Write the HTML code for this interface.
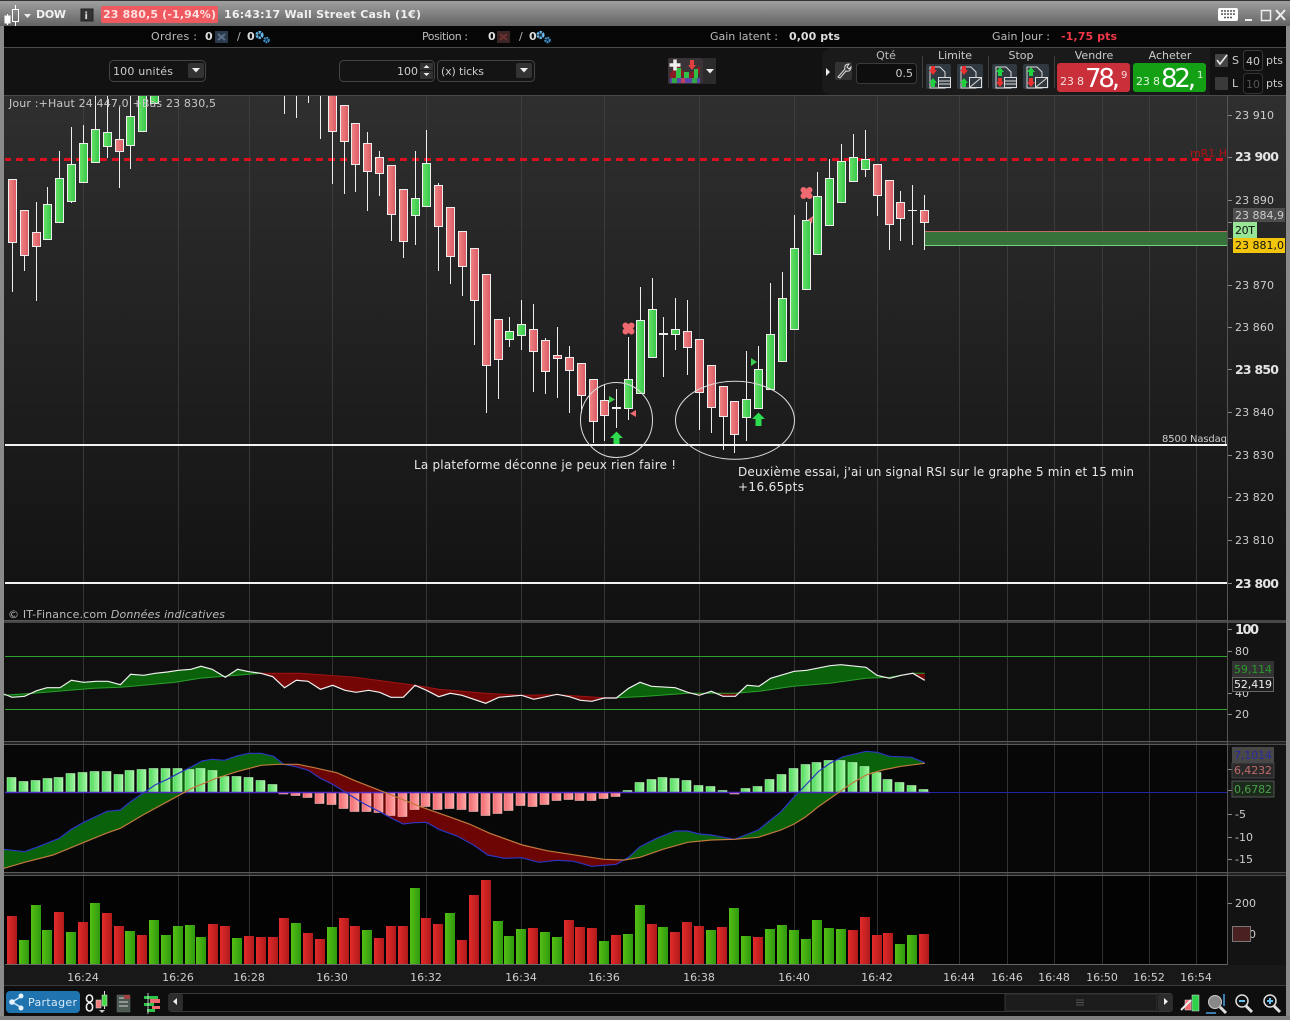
<!DOCTYPE html>
<html><head><meta charset="utf-8"><title>DOW</title>
<style>
html,body{margin:0;padding:0;background:#000;width:1290px;height:1020px;overflow:hidden}
svg{display:block}
text{font-family:"DejaVu Sans","Liberation Sans",sans-serif;font-size:11px;fill:#ccc}
.b{font-weight:bold}
.g{fill:url(#gg);stroke:#eee}
.r{fill:url(#gr);stroke:#eee}
.hg{fill:url(#hg);stroke:#cfc;stroke-width:.5}
.hr{fill:url(#hr);stroke:#fcc;stroke-width:.5}
.vg{fill:url(#vg)}
.vr{fill:url(#vr)}
.ax{fill:#ccc}
.t{fill:#ccc;text-anchor:middle}
</style></head><body>
<svg width="1290" height="1020" viewBox="0 0 1290 1020" xmlns="http://www.w3.org/2000/svg">
<defs>
<linearGradient id="tb" x1="0" y1="0" x2="0" y2="1"><stop offset="0" stop-color="#a2a2a2"/><stop offset="1" stop-color="#636363"/></linearGradient>
<linearGradient id="bg" x1="0" y1="0" x2="0" y2="1"><stop offset="0" stop-color="#2f2f2f"/><stop offset="1" stop-color="#111"/></linearGradient>
<linearGradient id="gg" x1="0" y1="0" x2="1" y2="0"><stop offset="0" stop-color="#66e066"/><stop offset="1" stop-color="#36c84a"/></linearGradient>
<linearGradient id="gr" x1="0" y1="0" x2="1" y2="0"><stop offset="0" stop-color="#ee8484"/><stop offset="1" stop-color="#dc5a64"/></linearGradient>
<linearGradient id="hg" x1="0" y1="0" x2="1" y2="0"><stop offset="0" stop-color="#4fdc5a"/><stop offset="1" stop-color="#a4f4a4"/></linearGradient>
<linearGradient id="hr" x1="0" y1="0" x2="1" y2="0"><stop offset="0" stop-color="#f06a70"/><stop offset="1" stop-color="#ffa4a4"/></linearGradient>
<linearGradient id="vg" x1="0" y1="0" x2="1" y2="0"><stop offset="0" stop-color="#55bf14"/><stop offset="1" stop-color="#2f9a0e"/></linearGradient>
<linearGradient id="vr" x1="0" y1="0" x2="1" y2="0"><stop offset="0" stop-color="#e32a2a"/><stop offset="1" stop-color="#b01a1a"/></linearGradient>
<clipPath id="cc"><rect x="5" y="96" width="1222" height="524"/></clipPath>
<g id="gear"><circle cx="4.500" cy="4" r="2.800" fill="#123" stroke="#6ab8ea" stroke-width="2.600" stroke-dasharray="2.200 .8"/><circle cx="11.500" cy="9" r="2.200" fill="#123" stroke="#3f8fc8" stroke-width="2.200" stroke-dasharray="1.800 .7"/></g>
</defs>

<!-- frame -->
<rect width="1290" height="1020" fill="#7e7e7e"/>
<rect x="0" y="0" width="1290" height="26" fill="url(#tb)"/>
<rect x="0" y="0" width="1290" height="1" fill="#333"/>
<rect x="4" y="26" width="1282" height="21" fill="#060606"/>
<rect x="4" y="47" width="1282" height="1" fill="#4a4a4a"/>
<rect x="4" y="48" width="1282" height="47" fill="#121212"/>
<rect x="4" y="95" width="1282" height="1" fill="#4a4a4a"/>

<!-- title -->
<path d="M5 16h5v7H5zM7.500 14v11" fill="#fff" stroke="#fff"/>
<rect x="12.500" y="9.500" width="6" height="12" fill="none" stroke="#fff"/><path d="M15.500 5v4M15.500 22v4" stroke="#fff"/>
<path d="M24 14h7l-3.500 4z" fill="#eee"/>
<text x="36" y="18" class="b" style="fill:#f2f2f2" textLength="30">DOW</text>
<rect x="81" y="9" width="12" height="12" fill="#333" stroke="#222"/><text x="84.500" y="19" class="b" style="fill:#ddd;font-size:10px">i</text>
<rect x="101" y="6" width="117" height="17" rx="2" fill="#ee5a60"/>
<text x="103" y="18" class="b" style="fill:#ffe0e0" textLength="113">23 880,5 (-1,94%)</text>
<text x="224" y="18" class="b" style="fill:#f0f0f0" textLength="197">16:43:17 Wall Street Cash (1€)</text>
<rect x="1218" y="8" width="20" height="13" rx="2" fill="#fff"/>
<path d="M1221 11h14M1221 14h14M1224 17.500h8" stroke="#555" stroke-width="1.500" stroke-dasharray="2 1"/>
<path d="M1245 20h7" stroke="#eee" stroke-width="2"/>
<rect x="1261.500" y="10.500" width="9" height="10" fill="none" stroke="#eee" stroke-width="1.500"/>
<path d="M1276 10l9 10M1285 10l-9 10" stroke="#eee" stroke-width="2"/>

<!-- row 2 -->
<text x="151" y="40" textLength="46" style="fill:#bbb">Ordres :</text>
<text x="205" y="40" class="b" style="fill:#ddd">0</text>
<rect x="215" y="31" width="13" height="12" fill="#2b3a4a"/><path d="M218 34l7 6M225 34l-7 6" stroke="#5a6f88" stroke-width="2"/>
<text x="237" y="40" style="fill:#bbb">/</text><text x="247" y="40" class="b" style="fill:#ddd">0</text>
<use href="#gear" x="255" y="31"/>
<text x="422" y="40" textLength="46" style="fill:#bbb">Position :</text>
<text x="488" y="40" class="b" style="fill:#ddd">0</text>
<rect x="497" y="31" width="13" height="12" fill="#3a2424"/><path d="M500 34l7 6M507 34l-7 6" stroke="#703030" stroke-width="2"/>
<text x="519" y="40" style="fill:#bbb">/</text><text x="529" y="40" class="b" style="fill:#ddd">0</text>
<use href="#gear" x="536" y="31"/>
<text x="710" y="40" textLength="68" style="fill:#bbb">Gain latent :</text>
<text x="789" y="40" class="b" style="fill:#ddd" textLength="51">0,00 pts</text>
<text x="992" y="40" textLength="58" style="fill:#bbb">Gain Jour :</text>
<text x="1061" y="40" class="b" style="fill:#f03848" textLength="56">-1,75 pts</text>

<!-- row 3 left -->
<rect x="109.500" y="60.500" width="96" height="21" rx="4" fill="#141414" stroke="#444"/>
<text x="113" y="75" textLength="60" style="fill:#ccc">100 unités</text>
<rect x="188" y="63" width="16" height="15" rx="2" fill="#333"/><path d="M192 68h8l-4 4.500z" fill="#eee"/>
<rect x="339.500" y="60.500" width="95" height="21" rx="4" fill="#141414" stroke="#444"/>
<text x="397" y="75" style="fill:#ccc">100</text>
<rect x="420" y="63" width="13" height="7" fill="#333"/><rect x="420" y="71" width="13" height="8" fill="#333"/>
<path d="M423.500 68l3-3 3 3zM423.500 73l3 3 3-3z" fill="#eee"/>
<rect x="437.500" y="60.500" width="97" height="21" rx="4" fill="#141414" stroke="#444"/>
<text x="441" y="75" textLength="43" style="fill:#ccc">(x) ticks</text>
<rect x="516" y="63" width="16" height="15" rx="2" fill="#333"/><path d="M520 68h8l-4 4.500z" fill="#eee"/>
<rect x="668" y="58" width="35" height="26" rx="2" fill="#3a3438"/>
<path d="M670 73l8-9 5 7 6 3 11-8v7l-11 7-8-4-11 5z" fill="#8a1a24"/>
<rect x="676" y="68" width="5" height="10" fill="#2fc048"/><rect x="684" y="72" width="5" height="7" fill="#2fc048"/><rect x="694" y="69" width="4" height="9" fill="#2fc048"/>
<rect x="670" y="78" width="30" height="5" fill="#5a46a8"/><rect x="672" y="78" width="5" height="5" fill="#2fa848"/><rect x="681" y="78" width="4" height="5" fill="#c04060"/><rect x="692" y="78" width="5" height="5" fill="#2fa848"/>
<path d="M669.500 65h11M675 59.500v11" stroke="#eee" stroke-width="3.500"/>
<path d="M690 60h4v5h2l-4 5-4-5h2z" fill="#e04040"/>
<rect x="703" y="58" width="13" height="26" fill="#2b2b2b"/><path d="M706 69h8l-4 4.500z" fill="#eee"/>

<!-- right toolbar -->
<path d="M830 48q-8 3-8 10v28q0 7 8 9h380V48z" fill="#1a1a1a"/>
<rect x="1210" y="48" width="76" height="47" fill="#121212"/>
<path d="M826 68l4 4-4 4z" fill="#eee"/>
<rect x="835" y="62" width="17" height="18" rx="2" fill="#333"/>
<path d="M838 77l7-8c-1-3 1-5 4-5l-2 3 2 2 2-2c0 3-2 5-5 4l-6 7z" fill="none" stroke="#ddd"/>
<text x="886" y="59" text-anchor="middle" style="fill:#bbb">Qté</text>
<rect x="856.500" y="63.500" width="60" height="20" rx="3" fill="#0e0e0e" stroke="#3a3a3a"/>
<text x="913" y="77" text-anchor="end" style="fill:#ccc">0.5</text>
<path d="M922.500 56v32M988.500 56v32M1054.500 56v32" stroke="#3f3f3f"/>
<text x="955" y="59" text-anchor="middle" style="fill:#ccc">Limite</text>
<text x="1021" y="59" text-anchor="middle" style="fill:#ccc">Stop</text>
<!-- buttons -->
<g fill="#303840">
<rect x="926" y="64" width="25" height="25" rx="2"/><rect x="957" y="64" width="26" height="25" rx="2"/><rect x="992" y="64" width="25" height="25" rx="2"/><rect x="1023" y="64" width="26" height="25" rx="2"/>
</g>
<g fill="none" stroke="#ddd">
<path d="M930 67h10l5 5v16h-15z"/><path d="M961 67h10l5 5v16h-15z"/><path d="M996 67h10l5 5v16h-15z"/><path d="M1027 67h10l5 5v16h-15z"/>
<rect x="938.500" y="77.500" width="12" height="10" fill="#303840"/><path d="M938.500 81h12M938.500 84h12"/>
<rect x="1004.500" y="77.500" width="12" height="10" fill="#303840"/><path d="M1004.500 81h12M1004.500 84h12"/>
<rect x="969.500" y="77.500" width="12" height="10" fill="#303840"/><path d="M969.500 87.500l12-10"/>
<rect x="1035.500" y="77.500" width="12" height="10" fill="#303840"/><path d="M1035.500 87.500l12-10"/>
</g>
<path d="M931 66h4v4h2l-4 5-4-5h2zM962 66h4v4h2l-4 5-4-5h2zM998 78h4v4h2l-4 5-4-5h2zM1029 78h4v4h2l-4 5-4-5h2z" fill="#e83030"/>
<path d="M931 87h4v-4h2l-4-5-4 5h2zM962 87h4v-4h2l-4-5-4 5h2zM998 76h4v-4h2l-4-5-4 5h2zM1029 76h4v-4h2l-4-5-4 5h2z" fill="#20d040"/>
<text x="1094" y="59" text-anchor="middle" style="fill:#ccc">Vendre</text>
<text x="1170" y="59" text-anchor="middle" style="fill:#ccc">Acheter</text>
<rect x="1057" y="63" width="73" height="29" rx="3" fill="#c9303a"/>
<rect x="1133" y="63" width="73" height="29" rx="3" fill="#14a014"/>
<text x="1060" y="85" textLength="24" style="fill:#f6dede;font-size:11px">23 8</text>
<text x="1085" y="87" textLength="35" style="fill:#fff;font-size:26px">78,</text>
<text x="1121" y="78" style="fill:#f6dede;font-size:10px">9</text>
<text x="1136" y="85" textLength="24" style="fill:#dff6df;font-size:11px">23 8</text>
<text x="1161" y="87" textLength="35" style="fill:#fff;font-size:26px">82,</text>
<text x="1197" y="78" style="fill:#dff6df;font-size:10px">1</text>
<rect x="1215" y="54" width="13" height="13" rx="1" fill="#444"/><path d="M1217 60l3 4 7-9" fill="none" stroke="#eee" stroke-width="1.500"/>
<text x="1232" y="64" style="fill:#ccc">S</text>
<rect x="1243.500" y="50.500" width="19" height="20" rx="3" fill="#0e0e0e" stroke="#3a3a3a"/><text x="1246" y="65" style="fill:#ccc">40</text>
<text x="1266" y="64" style="fill:#ccc">pts</text>
<rect x="1215" y="77" width="13" height="13" rx="1" fill="#3a3a3a"/>
<text x="1232" y="87" style="fill:#ccc">L</text>
<rect x="1243.500" y="73.500" width="19" height="20" rx="3" fill="#0e0e0e" stroke="#333"/><text x="1246" y="88" style="fill:#555">10</text>
<text x="1266" y="87" style="fill:#ccc">pts</text>

<!-- main panel -->
<rect x="4" y="96" width="1282" height="525" fill="url(#bg)"/>
<rect x="4" y="621" width="1282" height="120" fill="#0f0f0f"/>
<rect x="4" y="745" width="1282" height="127" fill="#070707"/>
<rect x="4" y="876" width="1282" height="89" fill="#030303"/>
<rect x="4" y="965" width="1282" height="21" fill="#181818"/>
<rect x="4" y="986" width="1282" height="30" fill="#0e0e0e"/>
<rect x="1228" y="621" width="58" height="344" fill="#131313"/>
<rect x="4" y="620" width="1282" height="3" fill="#555" opacity=".8"/>
<rect x="4" y="741" width="1282" height="4" fill="#4a4a4a"/><rect x="4" y="742" width="1282" height="2" fill="#222"/>
<rect x="4" y="872" width="1282" height="4" fill="#4a4a4a"/><rect x="4" y="873" width="1282" height="2" fill="#222"/>
<path d="M4 985.500h1282" stroke="#3a3a3a"/>
<path d="M1227.500 96v869M5 964.500h1222" stroke="#555"/>

<!-- grid -->
<path d="M83.500 96v869M178.500 96v869M249.500 96v869M332.500 96v869M426.500 96v869M521.500 96v869M604.500 96v869M699.500 96v869M794.500 96v869M877.500 96v869M959.500 96v869M1007.500 96v869M1054.500 96v869M1102.500 96v869M1149.500 96v869M1196.500 96v869" stroke="#444" stroke-opacity=".7" fill="none"/>
<path d="M4 620.500h1223M4 741.500h1223M4 744.500h1223M4 872.500h1223M4 875.500h1223" stroke="#5a5a5a"/>

<g clip-path="url(#cc)">
<!-- zone -->
<rect x="925" y="231" width="302" height="15" fill="#37763a" opacity=".95"/>
<path d="M925 231.500h302" stroke="#c06a6a"/><path d="M925 245.500h302" stroke="#78d078"/>
<!-- red dashed -->
<path d="M4 159.500h1225" stroke="#dc101c" stroke-width="3" stroke-dasharray="7 5"/>
<!-- wicks -->
<path stroke="#eee" fill="none" d="M12.500 242v50M24.500 255v16M36.500 202v99M47.500 187v18M59.500 151v28M71.500 127v76M83.500 125v19M95.500 96v34M107.500 96v62M119.500 107v81M130.500 96v73M142.500 96v5M154.500 96v2M284.500 96v18M296.500 96v22M308.500 96v7M320.500 96v43M332.500 131v53M344.500 141v53M355.500 164v28M367.500 132v79M379.500 151v45M391.500 214v27M403.500 241v17M415.500 151v94M426.500 130v34M438.500 183v88M450.500 256v28M462.500 266v30M474.500 300v45M486.500 365v48M498.500 359v40M509.500 317v30M521.500 300v50M533.500 304v88M545.500 338v56M557.500 327v71M569.500 346v67M581.500 395v18M593.500 421v22M604.500 385v56M616.500 389v39M628.500 337v83M640.500 287v34M652.500 278v32M663.500 317v60M675.500 298v52M687.500 300v75M699.500 392v38M711.500 407v26M723.500 416v34M734.500 434v19M746.500 351v90M758.500 346v24M770.500 283v52M782.500 272v27M794.500 215v34M806.500 202v19M817.500 172v25M829.500 159v20M841.500 144v18M853.500 134v24M865.500 130v47M877.500 195v21M889.500 224v26M900.500 191v50M912.500 185v60M924.500 195v55"/>
<!-- bodies -->
<g>
<rect class="r" x="8.500" y="179.500" width="8" height="63"/><rect class="r" x="20.500" y="210.500" width="8" height="45"/><rect class="r" x="32.500" y="232.500" width="8" height="14"/>
<rect class="g" x="43.500" y="204.500" width="8" height="35"/><rect class="g" x="55.500" y="178.500" width="8" height="44"/><rect class="g" x="67.500" y="164.500" width="8" height="37"/>
<rect class="g" x="79.500" y="143.500" width="8" height="39"/><rect class="g" x="91.500" y="129.500" width="8" height="33"/><rect class="g" x="103.500" y="132.500" width="8" height="14"/>
<rect class="r" x="115.500" y="139.500" width="8" height="12"/><rect class="g" x="126.500" y="116.500" width="8" height="29"/><rect class="g" x="138.500" y="90.500" width="8" height="41"/><rect class="g" x="150.500" y="90.500" width="8" height="13"/>
<rect class="r" x="328.500" y="90.500" width="8" height="41"/><rect class="r" x="340.500" y="105.500" width="8" height="36"/><rect class="r" x="351.500" y="123.500" width="8" height="41"/>
<rect class="r" x="363.500" y="143.500" width="8" height="28"/><rect class="r" x="375.500" y="157.500" width="8" height="16"/><rect class="r" x="387.500" y="165.500" width="8" height="49"/><rect class="r" x="399.500" y="189.500" width="8" height="52"/>
<rect class="g" x="411.500" y="198.500" width="8" height="17"/><rect class="g" x="422.500" y="163.500" width="8" height="43"/><rect class="r" x="434.500" y="185.500" width="8" height="41"/>
<rect class="r" x="446.500" y="207.500" width="8" height="49"/><rect class="r" x="458.500" y="231.500" width="8" height="35"/><rect class="r" x="470.500" y="248.500" width="8" height="52"/><rect class="r" x="482.500" y="274.500" width="8" height="91"/><rect class="r" x="494.500" y="319.500" width="8" height="40"/>
<rect class="g" x="505.500" y="331.500" width="8" height="8"/><rect class="g" x="517.500" y="324.500" width="8" height="11"/><rect class="r" x="529.500" y="329.500" width="8" height="22"/><rect class="r" x="541.500" y="340.500" width="8" height="31"/><rect class="r" x="553.500" y="355.500" width="8" height="3"/><rect class="r" x="565.500" y="357.500" width="8" height="13"/><rect class="r" x="577.500" y="363.500" width="8" height="32"/><rect class="r" x="589.500" y="379.500" width="8" height="42"/><rect class="r" x="600.500" y="400.500" width="8" height="15"/>
<rect class="g" x="624.500" y="379.500" width="8" height="29"/><rect class="g" x="636.500" y="320.500" width="8" height="73"/><rect class="g" x="648.500" y="309.500" width="8" height="48"/>
<rect class="g" x="671.500" y="329.500" width="8" height="5"/><rect class="r" x="683.500" y="331.500" width="8" height="16"/><rect class="r" x="695.500" y="339.500" width="8" height="53"/><rect class="r" x="707.500" y="365.500" width="8" height="42"/><rect class="r" x="719.500" y="386.500" width="8" height="30"/><rect class="r" x="730.500" y="401.500" width="8" height="33"/>
<rect class="g" x="742.500" y="399.500" width="8" height="18"/><rect class="g" x="754.500" y="369.500" width="8" height="39"/><rect class="g" x="766.500" y="334.500" width="8" height="55"/><rect class="g" x="778.500" y="298.500" width="8" height="63"/><rect class="g" x="790.500" y="248.500" width="8" height="81"/><rect class="g" x="802.500" y="220.500" width="8" height="69"/><rect class="g" x="813.500" y="196.500" width="8" height="58"/><rect class="g" x="825.500" y="178.500" width="8" height="47"/><rect class="g" x="837.500" y="161.500" width="8" height="41"/><rect class="g" x="849.500" y="157.500" width="8" height="24"/><rect class="g" x="861.500" y="159.500" width="8" height="10"/>
<rect class="r" x="873.500" y="164.500" width="8" height="31"/><rect class="r" x="885.500" y="180.500" width="8" height="44"/><rect class="r" x="896.500" y="202.500" width="8" height="16"/><rect class="r" x="920.500" y="210.500" width="8" height="12"/>
</g>
<path d="M612 408h9M659 334h9" stroke="#eee" stroke-width="2"/>
<path d="M908 210.500h9" stroke="#eee"/>
<!-- white lines -->
<rect x="5" y="444" width="1222" height="2" fill="#f4f4f4"/>
<rect x="5" y="582" width="1222" height="2" fill="#f4f4f4"/>
<!-- circles -->
<ellipse cx="616.500" cy="420" rx="36" ry="37.500" fill="none" stroke="#ddd"/>
<ellipse cx="735" cy="420.300" rx="59.500" ry="39" fill="none" stroke="#ddd"/>
<!-- markers -->
<path d="M616.500 431.500l6.500 6.500h-3.500v6h-6v-6h-3.500zM758.500 412.500l6.500 6.500h-3.500v7h-6v-7h-3.500z" fill="#2edc4e"/>
<path d="M609 396l6 3.500-6 3.500zM751 358l6 4-6 4z" fill="#3fce50"/>
<path d="M636 410v7l-6-3.500z" fill="#ee6a70"/>
<path d="M625.500 325.500l6 6M631.500 325.500l-6 6M803.500 190l6 6M809.500 190l-6 6" stroke="#ee6a70" stroke-width="6" stroke-linecap="round"/>
<path d="M813 216l-5 3.500 4 4z" fill="#ee7a7a"/>
</g>

<text x="9" y="107" textLength="207" style="fill:#c8c8c8">Jour :+Haut 24 447,0 +Bas 23 830,5</text>
<text x="1190" y="157" style="fill:#b01212" textLength="37">mR1 H</text>
<text x="1162" y="442" style="fill:#ccc;font-size:10px" textLength="65">8500 Nasdaq</text>
<text x="414" y="469" style="fill:#e8e8e8;font-size:12px" textLength="262">La plateforme déconne je peux rien faire !</text>
<text x="738" y="476" style="fill:#e8e8e8;font-size:12px" textLength="396">Deuxième essai, j'ai un signal RSI sur le graphe 5 min et 15 min</text>
<text x="738" y="491" style="fill:#e8e8e8;font-size:12px" textLength="66">+16.65pts</text>
<text x="8" y="618" style="fill:#bbb" textLength="217">© IT-Finance.com <tspan font-style="italic">Données indicatives</tspan></text>

<!-- right axis main -->
<path d="M1228 115.500h4M1228 157.500h4M1228 200.500h4M1228 285.500h4M1228 327.500h4M1228 369.500h4M1228 412.500h4M1228 455.500h4M1228 497.500h4M1228 540.500h4M1228 583.500h4M1228 222.500h4M1228 238.500h4" stroke="#888"/>
<g class="ax">
<text x="1235" y="119" textLength="39">23 910</text>
<text x="1235" y="161" class="b" style="font-size:12.500px;fill:#e4e4e4" textLength="44">23 900</text>
<text x="1235" y="204" textLength="39">23 890</text>
<text x="1235" y="289" textLength="39">23 870</text>
<text x="1235" y="331" textLength="39">23 860</text>
<text x="1235" y="374" class="b" style="font-size:12.500px;fill:#e4e4e4" textLength="44">23 850</text>
<text x="1235" y="416" textLength="39">23 840</text>
<text x="1235" y="459" textLength="39">23 830</text>
<text x="1235" y="501" textLength="39">23 820</text>
<text x="1235" y="544" textLength="39">23 810</text>
<text x="1235" y="588" class="b" style="font-size:12.500px;fill:#e4e4e4" textLength="44">23 800</text>
</g>
<rect x="1233" y="208" width="52" height="14" fill="#4d4d4d"/><text x="1235" y="219" style="fill:#ccc" textLength="49">23 884,9</text>
<rect x="1233" y="222" width="24" height="16" fill="#96e696"/><text x="1235" y="234" style="fill:#111" textLength="20">20T</text>
<rect x="1233" y="238" width="52" height="15" fill="#f2c40c"/><text x="1235" y="249" style="fill:#111" textLength="49">23 881,0</text>

<!-- RSI panel -->
<rect x="5" y="656" width="1222" height="1" fill="#30a030"/>
<rect x="5" y="709" width="1222" height="1" fill="#30a030"/>
<polygon fill="#0a620a" points="4,694 12,697.300 24.500,696.300 36.700,690.700 47,687.700 60,687.700 71.400,680.300 83.700,682.300 96,681.300 108,681.300 120.400,684.700 130.600,674.300 143.700,675.300 155,673.300 167.300,672 178.400,670.300 191,669.300 201,666.300 212.200,669.300 225.300,677.300 237.600,669.300 249,671.700 261,673.300 224.500,676.300 200,678.300 175.500,682.300 120.400,687.300 94,688.300 36.700,693 4,695.300"/>
<polygon fill="#740606" points="261,673.300 300,673.300 355,677.300 415,685.300 403.300,697.300 391,697.300 379.600,692.300 368.600,690.300 356,692.300 345,690.300 332.700,685.300 320.400,689.300 308,681.300 296.300,680.300 284.500,687.700 272.700,676.700"/>
<polygon fill="#740606" points="415,685.300 438.800,689.300 485.700,693.300 521.600,695.300 557,694.700 604,697.700 616,697.700 604,698 591.800,701.300 580.400,700.300 569.400,696.700 557,694.300 533.900,699.300 521.600,695.300 498.800,697.300 485.700,703.300 462,695.300 450.200,693.300 438.800,696.700 426.500,690.300"/>
<polygon fill="#0a620a" points="616.300,698 628.600,688.300 640,682.300 651.600,686.300 675.200,687.700 687.700,692.300 695,693.500 687.700,693.300 640,696.700 628.600,697.700"/>
<polygon fill="#740606" points="695,693.300 699.300,695.300 705,693.300"/><polygon fill="#740606" points="716,693.300 723,696.300 735.400,696.300 738,693.300"/>
<polygon fill="#0a620a" points="705,693.300 711.300,691.300 716,693.300"/>
<polygon fill="#0a620a" points="738,693 747,685.300 759,686.300 770.600,678.300 794.200,671.300 806.700,670.300 830,665.700 841,664.700 866,667.300 877,675.300 889.600,677.500 866,678.300 830,683.300 793.400,686.300 759,691.300"/>
<polygon fill="#0a620a" points="889.600,677.500 901.200,675.300 912.800,673.300"/>
<polygon fill="#740606" points="912.800,673.300 924.800,673.300 924.800,680.300"/>
<polyline fill="none" stroke="#2aa02a" points="4,695.300 36.700,693 94,688.300 120.400,687.300 175.500,682.300 200,678.300 224.500,676.300 261,673.300"/>
<polyline fill="none" stroke="#a01414" points="261,673.300 300,673.300 355,677.300 415,685.300 438.800,689.300 485.700,693.300 521.600,695.300 557,694.700 604,697.700 616,697.700"/>
<polyline fill="none" stroke="#2aa02a" points="616,697.700 640,696.700 687.700,693.300 735.400,693.300 759,691.300 793.400,686.300 830,683.300 866,678.300 889.600,677.300 912.800,673.300 924.800,673.300"/>
<polyline fill="none" stroke="#f0f0f0" stroke-width="1.200" points="4,694 12,697.300 24.500,696.300 36.700,690.700 47,687.700 60,687.700 71.400,680.300 83.700,682.300 96,681.300 108,681.300 120.400,684.700 130.600,674.300 143.700,675.300 155,673.300 167.300,672 178.400,670.300 191,669.300 201,666.300 212.200,669.300 225.300,677.300 237.600,669.300 249,671.700 261,673.300 272.700,676.700 284.500,687.700 296.300,680.300 308,681.300 320.400,689.300 332.700,685.300 345,690.300 356,692.300 368.600,690.300 379.600,692.300 391,697.300 403.300,697.300 415,685.300 426.500,690.300 438.800,696.700 450.200,693.300 462,695.300 485.700,703.300 498.800,697.300 521.600,695.300 533.900,699.300 557,694.300 569.400,696.700 580.400,700.300 591.800,701.300 604,698 616.300,698 628.600,688.300 640,682.300 651.600,686.300 675.200,687.700 687.700,692.300 699.300,695.300 711.300,691.300 723,696.300 735.400,696.300 747,685.300 759,686.300 770.600,678.300 794.200,671.300 806.700,670.300 830,665.700 841,664.700 866,667.300 877,675.300 889.600,678.300 901.200,675.300 912.800,673.300 924.800,680.300"/>
<path d="M1228 629.500h4M1228 651.500h4M1228 714.500h4M1228 693.500h4" stroke="#888"/>
<text x="1235" y="634" class="b" style="font-size:13px;fill:#e4e4e4" textLength="24">100</text>
<text x="1235" y="655" style="fill:#ccc">80</text>
<text x="1235" y="697" style="fill:#ccc">40</text>
<text x="1235" y="718" style="fill:#ccc">20</text>
<rect x="1232" y="661" width="42" height="16" fill="#333"/><text x="1234" y="673" style="fill:#2a9a2a" textLength="38">59,114</text>
<rect x="1232.500" y="677.500" width="41" height="14" fill="#1c1c1c" stroke="#666"/><text x="1234" y="688" style="fill:#f0f0f0" textLength="38">52,419</text>

<!-- MACD panel -->
<polygon fill="#0a620a" points="4,849.300 24.500,851.700 36.700,847.300 59.200,838.300 71.400,829.300 83.700,822.300 107,811.300 120.400,810 130.600,801.700 142.900,793.300 155,785 167.300,779.300 179.600,772.700 191.800,766.700 202,761 212.200,759.300 224.500,760.300 236.700,756 249,753.300 261.200,753.300 273.500,756.300 283.700,764.300 277.500,764.300 261.200,765.300 236.700,771.700 216.300,778.300 191.800,788.300 167.300,801.700 142.900,815 120.400,828.300 106,833.300 81.600,843.300 53,855 24.500,862.300 4,868.300"/>
<polygon fill="#6e0505" points="283.700,764.300 298,764.300 314.300,767.700 336.700,772.700 355,780.700 385.700,792.700 420.400,806.700 449,816.700 469.400,824 489.800,833.300 522.400,845 547,850.700 579.600,855.700 604,859.300 624.500,860 616.300,864.300 591.800,866.300 573.500,861.300 557,860.300 538.800,862.300 521.600,857.700 504,858.300 487.800,855 473.500,845 457,836 438.800,829.300 426.500,822.300 414.300,822.700 403.300,824 391.800,818.300 379.600,811.700 363.300,803.300 347,793.300 332.700,784.300 320.400,778.300 308.200,770.300 296,766.700"/>
<polygon fill="#0a620a" points="624.500,860 628.600,857.300 640,846.700 656.600,838.300 675.200,831 687.700,831 699.300,834 711.300,835 734.500,839.300 711.300,840 687.700,842.300 662.800,849.300 640,857.300"/>
<polygon fill="#0a620a" points="734.500,839.300 758.200,830 781,811.700 794.200,796.700 805.800,785 818.300,771.700 829.900,763.300 843.200,756.700 866,751.300 877,752.300 889.600,756.300 911.600,757.300 924.800,762.700 901.200,766.300 882.500,770 866,775 853.500,782.300 839,792.300 818.300,806.700 805.800,816.700 794.200,824 781,830 758.200,837.300"/>
<g>
<rect class="hg" x="7" y="777.500" width="9" height="15"/><rect class="hg" x="19" y="781.500" width="9" height="11"/><rect class="hg" x="31" y="780.500" width="9" height="12"/><rect class="hg" x="43" y="778.500" width="9" height="14"/><rect class="hg" x="54" y="777.500" width="9" height="15"/><rect class="hg" x="66" y="773.500" width="9" height="19"/><rect class="hg" x="78" y="772.500" width="9" height="20"/><rect class="hg" x="90" y="771.500" width="9" height="21"/><rect class="hg" x="102" y="771.500" width="9" height="21"/><rect class="hg" x="114" y="774.500" width="9" height="18"/><rect class="hg" x="125" y="770.500" width="9" height="22"/><rect class="hg" x="137" y="769.500" width="9" height="23"/><rect class="hg" x="149" y="768.500" width="9" height="24"/><rect class="hg" x="161" y="768.500" width="9" height="24"/><rect class="hg" x="173" y="768.500" width="9" height="24"/><rect class="hg" x="185" y="769.500" width="9" height="23"/><rect class="hg" x="196" y="768.500" width="9" height="24"/><rect class="hg" x="208" y="770.500" width="9" height="22"/><rect class="hg" x="220" y="776.500" width="9" height="16"/><rect class="hg" x="232" y="776.500" width="9" height="16"/><rect class="hg" x="244" y="777.500" width="9" height="15"/><rect class="hg" x="256" y="780.500" width="9" height="12"/><rect class="hg" x="268" y="784.500" width="9" height="8"/>
<rect class="hr" x="279" y="792.500" width="9" height="1.500"/><rect class="hr" x="291" y="792.500" width="9" height="3"/><rect class="hr" x="303" y="792.500" width="9" height="5"/><rect class="hr" x="315" y="792.500" width="9" height="11"/><rect class="hr" x="327" y="792.500" width="9" height="12"/><rect class="hr" x="339" y="792.500" width="9" height="16"/><rect class="hr" x="350" y="792.500" width="9" height="19"/><rect class="hr" x="362" y="792.500" width="9" height="19"/><rect class="hr" x="374" y="792.500" width="9" height="20"/><rect class="hr" x="386" y="792.500" width="9" height="23"/><rect class="hr" x="398" y="792.500" width="9" height="24"/><rect class="hr" x="410" y="792.500" width="9" height="17"/><rect class="hr" x="421" y="792.500" width="9" height="14"/><rect class="hr" x="433" y="792.500" width="9" height="17"/><rect class="hr" x="445" y="792.500" width="9" height="16"/><rect class="hr" x="457" y="792.500" width="9" height="17"/><rect class="hr" x="469" y="792.500" width="9" height="19"/><rect class="hr" x="481" y="792.500" width="9" height="23"/><rect class="hr" x="493" y="792.500" width="9" height="21"/><rect class="hr" x="504" y="792.500" width="9" height="18"/><rect class="hr" x="516" y="792.500" width="9" height="13"/><rect class="hr" x="528" y="792.500" width="9" height="14"/><rect class="hr" x="540" y="792.500" width="9" height="12"/><rect class="hr" x="552" y="792.500" width="9" height="8"/><rect class="hr" x="564" y="792.500" width="9" height="7"/><rect class="hr" x="575" y="792.500" width="9" height="8"/><rect class="hr" x="587" y="792.500" width="9" height="8"/><rect class="hr" x="599" y="792.500" width="9" height="6"/><rect class="hr" x="611" y="792.500" width="9" height="4"/>
<rect class="hg" x="623" y="790.500" width="9" height="2"/><rect class="hg" x="635" y="782.500" width="9" height="10"/><rect class="hg" x="647" y="779.500" width="9" height="13"/><rect class="hg" x="658" y="777.500" width="9" height="15"/><rect class="hg" x="670" y="778.500" width="9" height="14"/><rect class="hg" x="682" y="780.500" width="9" height="12"/><rect class="hg" x="694" y="785.500" width="9" height="7"/><rect class="hg" x="706" y="786.500" width="9" height="6"/><rect class="hg" x="718" y="790.500" width="9" height="2"/>
<rect class="hr" x="730" y="792.500" width="9" height="1.500"/>
<rect class="hg" x="741" y="788.500" width="9" height="4"/><rect class="hg" x="753" y="786.500" width="9" height="6"/><rect class="hg" x="765" y="779.500" width="9" height="13"/><rect class="hg" x="777" y="774.500" width="9" height="18"/><rect class="hg" x="789" y="768.500" width="9" height="24"/><rect class="hg" x="801" y="764.500" width="9" height="28"/><rect class="hg" x="812" y="762.500" width="9" height="30"/><rect class="hg" x="824" y="760.500" width="9" height="32"/><rect class="hg" x="836" y="760.500" width="9" height="32"/><rect class="hg" x="848" y="762.500" width="9" height="30"/><rect class="hg" x="860" y="766.500" width="9" height="26"/><rect class="hg" x="872" y="772.500" width="9" height="20"/><rect class="hg" x="883" y="779.500" width="9" height="13"/><rect class="hg" x="895" y="782.500" width="9" height="10"/><rect class="hg" x="907" y="785.500" width="9" height="7"/><rect class="hg" x="919" y="789.500" width="9" height="3"/>
</g>
<path d="M5 792.500h925" stroke="#5028c8" stroke-width="1.600"/><path d="M930 792.500h297" stroke="#2424a8"/>
<polyline fill="none" stroke="#2c36c0" stroke-width="1.200" points="4,849.300 24.500,851.700 36.700,847.300 59.200,838.300 71.400,829.300 83.700,822.300 107,811.300 120.400,810 130.600,801.700 142.900,793.300 155,785 167.300,779.300 179.600,772.700 191.800,766.700 202,761 212.200,759.300 224.500,760.300 236.700,756 249,753.300 261.200,753.300 273.500,756.300 283.700,764.300 296,766.700 308.200,770.300 320.400,778.300 332.700,784.300 347,793.300 363.300,803.300 379.600,811.700 391.800,818.300 403.300,824 414.300,822.700 426.500,822.300 438.800,829.300 457,836 473.500,845 487.800,855 504,858.300 521.600,857.700 538.800,862.300 557,860.300 573.500,861.300 591.800,866.300 616.300,864.300 628.600,857.300 640,846.700 656.600,838.300 675.200,831 687.700,831 699.300,834 711.300,835 734.500,839.300 758.200,830 781,811.700 794.200,796.700 805.800,785 818.300,771.700 829.900,763.300 843.200,756.700 866,751.300 877,752.300 889.600,756.300 911.600,757.300 924.800,762.700"/>
<polyline fill="none" stroke="#c07a3c" stroke-width="1.200" points="4,868.300 24.500,862.300 53,855 81.600,843.300 106,833.300 120.400,828.300 142.900,815 167.300,801.700 191.800,788.300 216.300,778.300 236.700,771.700 261.200,765.300 277.500,764.300 298,764.300 314.300,767.700 336.700,772.700 355,780.700 385.700,792.700 420.400,806.700 449,816.700 469.400,824 489.800,833.300 522.400,845 547,850.700 579.600,855.700 604,859.300 624.500,860 640,857.300 662.800,849.300 687.700,842.300 711.300,840 734.500,839.300 758.200,837.300 781,830 794.200,824 805.800,816.700 818.300,806.700 839,792.300 853.500,782.300 866,775 882.500,770 901.200,766.300 924.800,763.300"/>
<path d="M1228 814.500h4M1228 837.500h4M1228 859.500h4M1228 769.500h4M1228 790.500h4" stroke="#888"/>
<text x="1235" y="818" style="fill:#ccc">-5</text>
<text x="1235" y="841" style="fill:#ccc">-10</text>
<text x="1235" y="863" style="fill:#ccc">-15</text>
<rect x="1232" y="747" width="42" height="16" fill="#484848"/><text x="1234" y="759" style="fill:#2a2a9a" textLength="38">7,1014</text>
<rect x="1232" y="763" width="42" height="15" fill="#2a2a2a" stroke="#444"/><text x="1234" y="774" style="fill:#c06a6a" textLength="38">6,4232</text>
<rect x="1232" y="781" width="42" height="16" fill="#1c2a1c" stroke="#555"/><text x="1234" y="793" style="fill:#4aa04a" textLength="38">0,6782</text>

<!-- Volume -->
<g>
<rect class="vr" x="7" y="916" width="10" height="48"/><rect class="vg" x="19" y="940" width="10" height="24"/><rect class="vg" x="31" y="905" width="10" height="59"/><rect class="vg" x="42" y="930" width="10" height="34"/><rect class="vr" x="54" y="912" width="10" height="52"/><rect class="vg" x="66" y="932" width="10" height="32"/><rect class="vr" x="78" y="922" width="10" height="42"/><rect class="vg" x="90" y="903" width="10" height="61"/><rect class="vr" x="102" y="913" width="10" height="51"/><rect class="vr" x="114" y="926" width="10" height="38"/><rect class="vg" x="125" y="931" width="10" height="33"/><rect class="vr" x="137" y="935" width="10" height="29"/><rect class="vg" x="149" y="920" width="10" height="44"/><rect class="vg" x="161" y="935" width="10" height="29"/><rect class="vg" x="173" y="926" width="10" height="38"/><rect class="vg" x="185" y="925" width="10" height="39"/><rect class="vg" x="196" y="937" width="10" height="27"/><rect class="vr" x="208" y="924" width="10" height="40"/><rect class="vr" x="220" y="926" width="10" height="38"/><rect class="vg" x="232" y="938" width="10" height="26"/><rect class="vr" x="244" y="936" width="10" height="28"/><rect class="vr" x="256" y="937" width="10" height="27"/><rect class="vr" x="268" y="937" width="10" height="27"/><rect class="vr" x="279" y="918" width="10" height="46"/><rect class="vg" x="291" y="923" width="10" height="41"/><rect class="vr" x="303" y="933" width="10" height="31"/><rect class="vr" x="315" y="939" width="10" height="25"/><rect class="vg" x="327" y="927" width="10" height="37"/><rect class="vr" x="339" y="918" width="10" height="46"/><rect class="vr" x="350" y="926" width="10" height="38"/><rect class="vg" x="362" y="930" width="10" height="34"/><rect class="vr" x="374" y="938" width="10" height="26"/><rect class="vr" x="386" y="926" width="10" height="38"/><rect class="vr" x="398" y="926" width="10" height="38"/><rect class="vg" x="410" y="888" width="10" height="76"/><rect class="vr" x="421" y="918" width="10" height="46"/><rect class="vr" x="433" y="924" width="10" height="40"/><rect class="vg" x="445" y="913" width="10" height="51"/><rect class="vr" x="457" y="940" width="10" height="24"/><rect class="vr" x="469" y="895" width="10" height="69"/><rect class="vr" x="481" y="880" width="10" height="84"/><rect class="vg" x="493" y="921" width="10" height="43"/><rect class="vg" x="504" y="936" width="10" height="28"/><rect class="vg" x="516" y="929" width="10" height="35"/><rect class="vr" x="528" y="928" width="10" height="36"/><rect class="vg" x="540" y="932" width="10" height="32"/><rect class="vg" x="552" y="937" width="10" height="27"/><rect class="vr" x="564" y="920" width="10" height="44"/><rect class="vr" x="575" y="927" width="10" height="37"/><rect class="vr" x="587" y="928" width="10" height="36"/><rect class="vg" x="599" y="941" width="10" height="23"/><rect class="vr" x="611" y="935" width="10" height="29"/><rect class="vg" x="623" y="934" width="10" height="30"/><rect class="vg" x="635" y="905" width="10" height="59"/>
<rect class="vr" x="647" y="924" width="10" height="40"/><rect class="vg" x="658" y="927" width="10" height="37"/><rect class="vr" x="670" y="932" width="10" height="32"/><rect class="vr" x="682" y="922" width="10" height="42"/><rect class="vr" x="694" y="926" width="10" height="38"/><rect class="vg" x="706" y="930" width="10" height="34"/><rect class="vr" x="717" y="927" width="10" height="37"/><rect class="vg" x="729" y="908" width="10" height="56"/><rect class="vg" x="741" y="936" width="10" height="28"/><rect class="vr" x="753" y="937" width="10" height="27"/><rect class="vg" x="765" y="929" width="10" height="35"/><rect class="vg" x="777" y="925" width="10" height="39"/><rect class="vg" x="789" y="930" width="10" height="34"/><rect class="vg" x="801" y="939" width="10" height="25"/><rect class="vg" x="812" y="920" width="10" height="44"/><rect class="vg" x="824" y="928" width="10" height="36"/><rect class="vg" x="836" y="929" width="10" height="35"/><rect class="vr" x="848" y="930" width="10" height="34"/><rect class="vr" x="860" y="917" width="10" height="47"/><rect class="vr" x="872" y="935" width="10" height="29"/><rect class="vr" x="883" y="933" width="10" height="31"/><rect class="vg" x="895" y="944" width="10" height="20"/><rect class="vg" x="907" y="935" width="10" height="29"/><rect class="vr" x="919" y="934" width="10" height="30"/>
</g>
<path d="M5 964.500h1222" stroke="#666"/>
<path d="M1228 903.500h4" stroke="#888"/>
<text x="1235" y="907" style="fill:#ccc">200</text>
<text x="1249" y="938" style="fill:#ccc">0</text>
<rect x="1232.500" y="926.500" width="18" height="15" fill="#4a2020" stroke="#777"/>

<!-- time axis -->
<g>
<text x="83" y="981" class="t">16:24</text><text x="178" y="981" class="t">16:26</text><text x="249" y="981" class="t">16:28</text><text x="332" y="981" class="t">16:30</text><text x="426" y="981" class="t">16:32</text><text x="521" y="981" class="t">16:34</text><text x="604" y="981" class="t">16:36</text><text x="699" y="981" class="t">16:38</text><text x="794" y="981" class="t">16:40</text><text x="877" y="981" class="t">16:42</text><text x="959" y="981" class="t">16:44</text><text x="1007" y="981" class="t">16:46</text><text x="1054" y="981" class="t">16:48</text><text x="1102" y="981" class="t">16:50</text><text x="1149" y="981" class="t">16:52</text><text x="1196" y="981" class="t">16:54</text>
</g>

<!-- bottom bar -->
<rect x="6" y="991" width="74" height="22" rx="4" fill="#1f74b0"/>
<path d="M12 1002l10-6M12 1002l10 6" stroke="#cfe6f5" stroke-width="1.500"/>
<circle cx="12" cy="1002" r="2.800" fill="#e6f2fa"/><circle cx="21" cy="996" r="2.500" fill="#e6f2fa"/><circle cx="21" cy="1008" r="2.500" fill="#e6f2fa"/>
<text x="28" y="1006" style="fill:#d8eaf6" textLength="49">Partager</text>
<rect x="86.500" y="995" width="6" height="7" rx="3" fill="none" stroke="#eee" stroke-width="1.600"/><rect x="86.500" y="1003" width="6" height="8" rx="3" fill="none" stroke="#eee" stroke-width="1.600"/>
<rect x="96" y="1000" width="5" height="8" fill="#ee7a7a" stroke="#ddd" stroke-width=".5"/><rect x="102" y="995" width="5" height="11" fill="#46d846" stroke="#ddd" stroke-width=".5"/>
<path d="M104.500 991v4M104.500 1006v3" stroke="#ddd"/><path d="M99 1010h6l-3 3z" fill="#ccc"/>
<rect x="117" y="995" width="13" height="17" fill="#4a5a50" stroke="#666" stroke-width=".5"/>
<path d="M119 998h9M119 1002h9M119 1006h9" stroke="#bbb" stroke-width="1.200"/>
<rect x="124" y="995" width="6" height="4" fill="#a04040"/>
<path d="M144 996h14v3h-14zM144 1003h10v3h-10zM147 1009h8v3h-8z" fill="#2fc44a"/>
<path d="M150 999h10v4h-10zM152 1006h8v3h-8z" fill="#ee6a70"/>
<path d="M148 993v21" stroke="#eee" stroke-width=".8"/>
<rect x="168.500" y="993.500" width="1004" height="18" rx="3" fill="#080808" stroke="#3a3a3a"/>
<rect x="168" y="994" width="15" height="17" rx="2" fill="#2c2c2c"/><path d="M177 998v7l-4-3.500z" fill="#eee"/>
<rect x="1005" y="994" width="152" height="17" fill="#1c1c1c" stroke="#333"/>
<path d="M1076 1000h8M1076 1002.500h8M1076 1005h8" stroke="#555"/>
<rect x="1158" y="994" width="15" height="17" rx="2" fill="#2c2c2c"/><path d="M1164 998v7l4-3.500z" fill="#eee"/>
<rect x="1185" y="1000" width="6" height="10" fill="#ee6a70" stroke="#ddd" stroke-width=".5"/><rect x="1192" y="995" width="7" height="16" fill="#2fd04a" stroke="#ddd" stroke-width=".5"/>
<path d="M1181 1010l10-10" stroke="#eee" stroke-width="2"/>
<circle cx="1215" cy="1002" r="6.500" fill="#888" stroke="#ccc"/><path d="M1220 1007l6 6" stroke="#ddd" stroke-width="3"/>
<path d="M1224 994v12M1206 1013h10" stroke="#4aa0e0" stroke-width="1.500"/>
<circle cx="1242" cy="1001" r="6" fill="#111" stroke="#ddd" stroke-width="1.500"/><path d="M1246 1006l6 6" stroke="#ddd" stroke-width="3"/><path d="M1239 1001h6" stroke="#6ac0f0" stroke-width="2"/>
<circle cx="1270" cy="1001" r="6" fill="#111" stroke="#ddd" stroke-width="1.500"/><path d="M1274 1006l6 6" stroke="#ddd" stroke-width="3"/><path d="M1267 1001h6M1270 998v6" stroke="#6ac0f0" stroke-width="2"/>
<rect x="0" y="1016" width="1290" height="4" fill="#7e7e7e"/>
<rect x="0" y="26" width="4" height="990" fill="#8a8a8a"/>
<rect x="1286" y="26" width="4" height="990" fill="#8a8a8a"/>
</svg>
</body></html>
